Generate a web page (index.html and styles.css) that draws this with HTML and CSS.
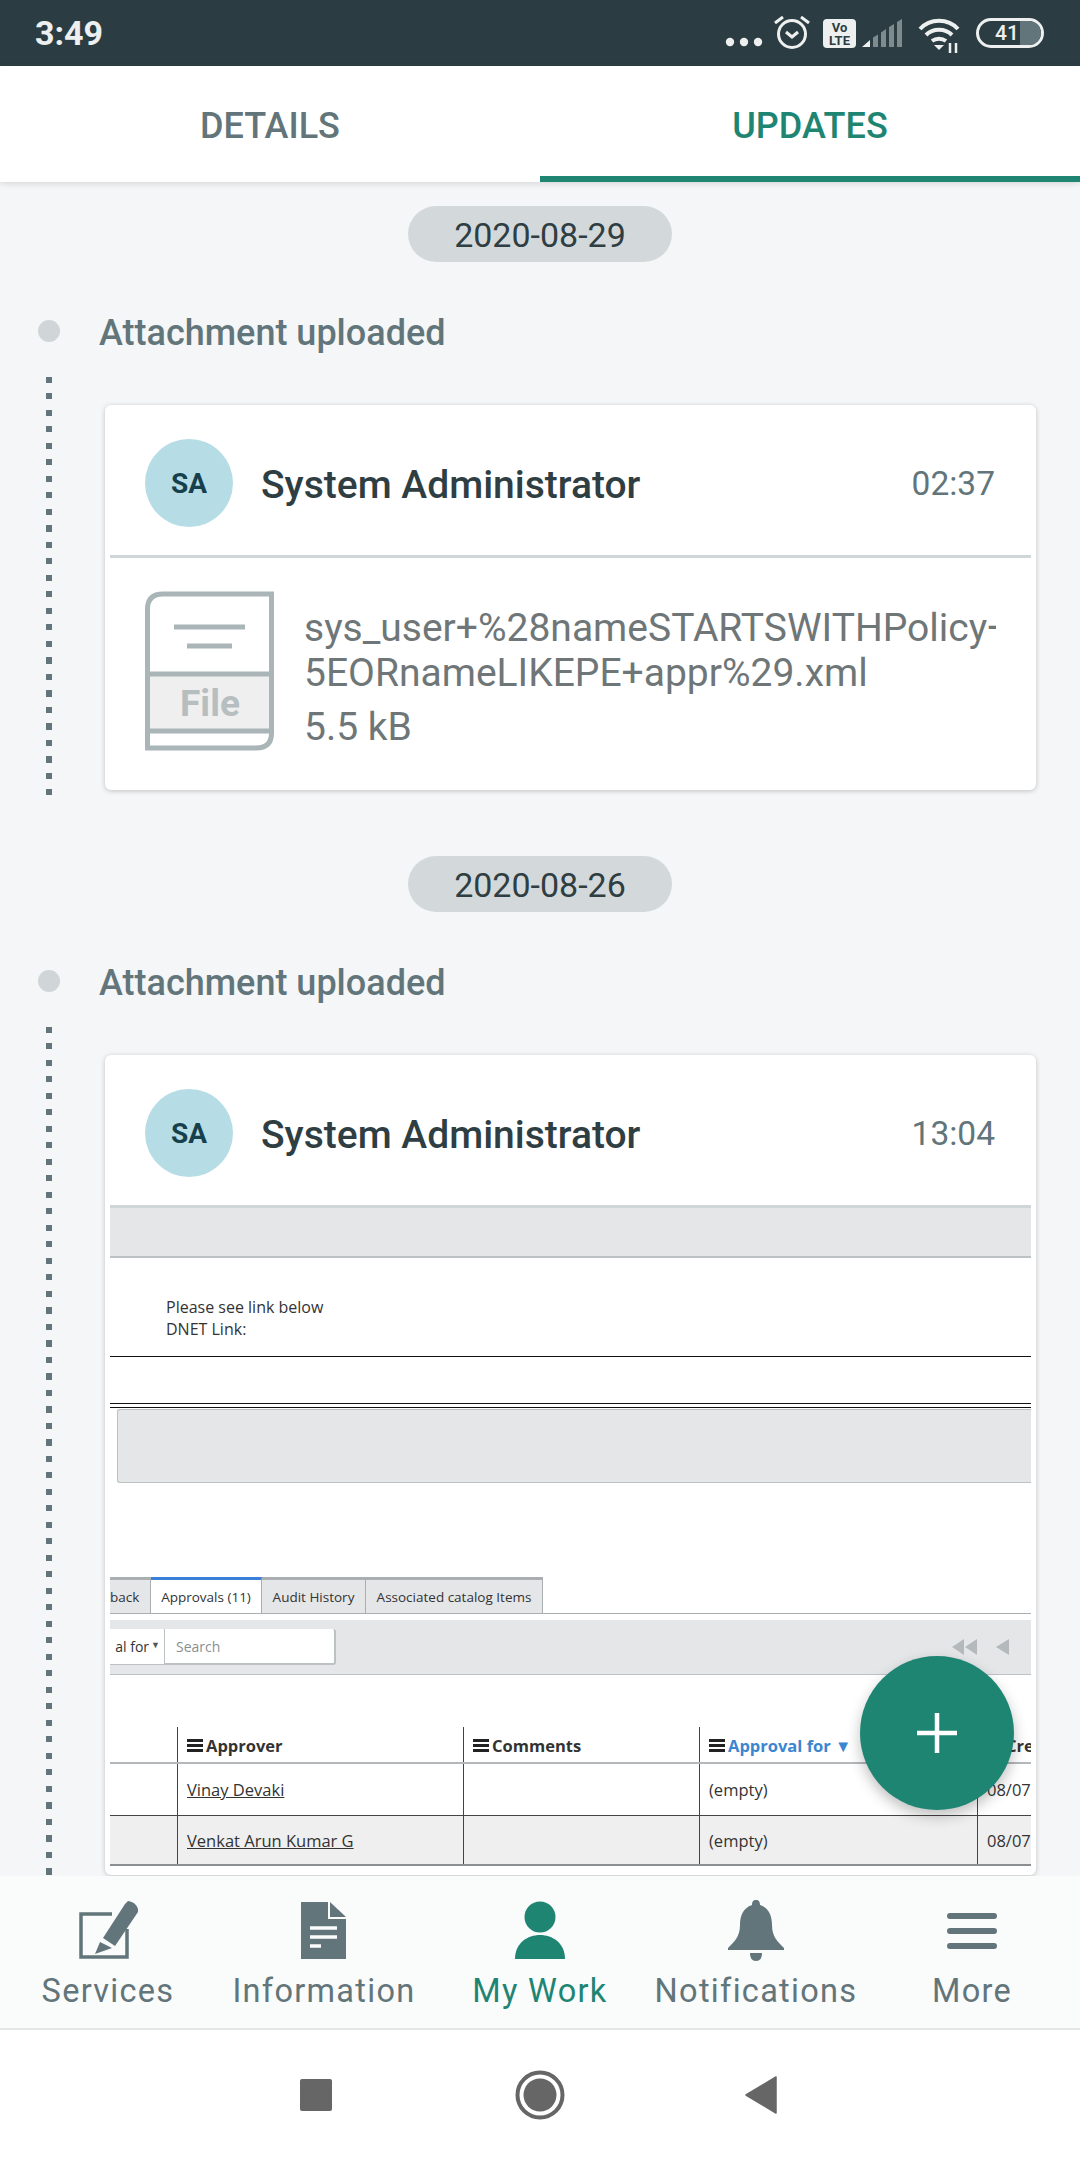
FILE: index.html
```html
<!DOCTYPE html>
<html lang="en">
<head>
  <meta charset="UTF-8">
  <title>Updates</title>
  <link rel="stylesheet" href="styles.css">
</head>
<body>
<div class="phone">
  <div class="status-bar">
    <div class="status-time">3:49</div>
    <div class="status-icons">
      <svg class="st-dots" width="40" height="10" viewBox="0 0 40 10"><circle cx="5" cy="5" r="4.2"/><circle cx="19" cy="5" r="4.2"/><circle cx="33" cy="5" r="4.2"/></svg>
      <svg class="st-alarm" width="38" height="36" viewBox="0 0 38 36"><circle cx="19" cy="21" r="13.5" fill="none" stroke="#eef0f0" stroke-width="3"/><path d="M13 19l6 5 6-5" fill="none" stroke="#eef0f0" stroke-width="3"/><path d="M2 10l8-6M36 10l-8-6" fill="none" stroke="#eef0f0" stroke-width="3"/></svg>
      <svg class="st-volte" width="33" height="29" viewBox="0 0 33 29"><rect width="33" height="29" rx="4" fill="#eef0f0"/><text x="16.5" y="13" class="volte-text">Vo</text><text x="16.5" y="25.5" class="volte-text">LTE</text></svg>
      <svg class="st-signal" width="41" height="30" viewBox="0 0 41 30"><path d="M0 29H8V22Z" fill="#eef0f0"/><path d="M11 29V19.500L16 16.500V29ZM19 29V14.500L24 11V29ZM27 29V9L32 6V29ZM35 29V4L40 1V29Z" fill="#7d8b8e"/></svg>
      <svg class="st-wifi" width="44" height="36" viewBox="0 0 44 36"><path d="M2 11C12 0 30 0 40 11M8 17c7-7 19-7 26 0M14 23c4-3 10-3 14 0" fill="none" stroke="#eef0f0" stroke-width="4"/><path d="M16 27h10l-5 5z" fill="#eef0f0"/><path d="M32 25v10M38 25v10" stroke="#eef0f0" stroke-width="2.500"/></svg>
      <div class="battery"><div class="battery-fill"></div><span class="battery-num">41</span></div>
    </div>
  </div>

  <div class="tabs">
    <div class="tab">DETAILS</div>
    <div class="tab tab-active">UPDATES</div>
  </div>

  <div class="content">
    <div class="day">
      <div class="date-pill">2020-08-29</div>
      <div class="event-title"><span class="event-dot"></span>Attachment uploaded</div>
      <div class="event-body">
        <div class="dots"></div>
        <div class="card">
          <div class="card-head">
            <div class="avatar">SA</div>
            <div class="card-name">System Administrator</div>
            <div class="card-time">02:37</div>
          </div>
          <div class="file-row">
            <svg class="file-icon" width="129" height="160" viewBox="0 0 129 160">
              <rect x="3" y="83" width="123" height="57" fill="#efefef"/>
              <path d="M126.500 3H18Q2.500 3 2.500 18V157H111Q126.500 157 126.500 142Z" fill="none" stroke="#aab5b8" stroke-width="5"/>
              <path d="M3 83H126M3 140H126" stroke="#aab5b8" stroke-width="5"/>
              <path d="M29 36H100M42 55H87" stroke="#aab5b8" stroke-width="5"/>
              <text x="65" y="125" class="file-label">File</text>
            </svg>
            <div class="file-info">
              <div class="file-name">sys_user+%28nameSTARTSWITHPolicy+</div>
              <div class="file-name">5EORnameLIKEPE+appr%29.xml</div>
              <div class="file-size">5.5 kB</div>
            </div>
          </div>
        </div>
      </div>
    </div>

    <div class="day day-tall">
      <div class="date-pill">2020-08-26</div>
      <div class="event-title"><span class="event-dot"></span>Attachment uploaded</div>
      <div class="event-body">
        <div class="dots"></div>
        <div class="card card-tall">
          <div class="card-head">
            <div class="avatar">SA</div>
            <div class="card-name">System Administrator</div>
            <div class="card-time">13:04</div>
          </div>
          <div class="shot">
            <div class="shot-bar"></div>
            <div class="shot-msg">Please see link below<br>DNET Link:</div>
            <div class="shot-rule"></div>
            <div class="shot-double"></div>
            <div class="shot-box"></div>
            <div class="shot-tabs">
              <div class="shot-tab shot-tab-cut">back</div>
              <div class="shot-tab shot-tab-on">Approvals (11)</div>
              <div class="shot-tab shot-tab-audit">Audit History</div>
              <div class="shot-tab shot-tab-assoc">Associated catalog Items</div>
            </div>
            <div class="shot-tools">
              <div class="shot-select">al for<span class="shot-caret">▼</span></div>
              <div class="shot-search">Search</div>
              <div class="shot-pager">
                <svg width="58" height="16" viewBox="0 0 58 16"><path d="M0 8l12-8v16zM13 8l12-8v16zM44 8l13-8v16z" fill="#b4babc"/></svg>
              </div>
            </div>
            <div class="shot-table">
              <div class="shot-row shot-row-head">
                <div class="cell cell-a"></div>
                <div class="cell cell-b"><span class="menu-icon"></span>Approver</div>
                <div class="cell cell-c"><span class="menu-icon"></span>Comments</div>
                <div class="cell cell-d"><span class="menu-icon"></span><span class="sorted">Approval for ▼</span></div>
                <div class="cell cell-e"><span class="menu-icon"></span>Cre</div>
              </div>
              <div class="shot-row shot-row-one">
                <div class="cell cell-a"></div>
                <div class="cell cell-b"><u>Vinay Devaki</u></div>
                <div class="cell cell-c"></div>
                <div class="cell cell-d">(empty)</div>
                <div class="cell cell-e">08/07</div>
              </div>
              <div class="shot-row shot-row-two">
                <div class="cell cell-a"></div>
                <div class="cell cell-b"><u>Venkat Arun Kumar G</u></div>
                <div class="cell cell-c"></div>
                <div class="cell cell-d">(empty)</div>
                <div class="cell cell-e">08/07</div>
              </div>
            </div>
          </div>
        </div>
      </div>
    </div>

    <div class="fab">
      <svg width="44" height="44" viewBox="0 0 44 44"><path d="M22 2V42M2 22H42" stroke="#fff" stroke-width="4.500"/></svg>
    </div>
  </div>

  <div class="bottom-nav">
    <div class="nav-item">
      <svg width="64" height="62" viewBox="0 0 64 62"><path d="M51 29V57H5V14H36" fill="none" stroke="#62757a" stroke-width="3.500"/><path d="M52 1c6 1 11 5 10 11L39 46 27 38 49 4zM24 42l12 6-17 6z" fill="#62757a"/></svg>
      <div class="nav-label">Services</div>
    </div>
    <div class="nav-item">
      <svg width="46" height="62" viewBox="0 0 46 62"><path d="M0 2H27V19H45V59H0Z" fill="#62757a"/><path d="M29 2L45 17H29Z" fill="#62757a"/><path d="M9 28H36M9 37H36M9 46H20" stroke="#fafbfb" stroke-width="3.500"/></svg>
      <div class="nav-label">Information</div>
    </div>
    <div class="nav-item nav-item-active">
      <svg width="50" height="62" viewBox="0 0 50 62"><circle cx="25" cy="17" r="15.500" fill="#1f8573"/><path d="M0 59C0 27 50 27 50 59Z" fill="#1f8573"/></svg>
      <div class="nav-label">My Work</div>
    </div>
    <div class="nav-item">
      <svg width="56" height="62" viewBox="0 0 56 62"><path d="M28 0c3 0 4 2 4 5 9 3 12 11 12 20 0 12 6 17 12 23v2H0v-2c6-6 12-11 12-23 0-9 3-17 12-20 0-3 1-5 4-5zM22 53h12c0 5-2 8-6 8s-6-3-6-8z" fill="#62757a"/></svg>
      <div class="nav-label">Notifications</div>
    </div>
    <div class="nav-item">
      <svg width="50" height="62" viewBox="0 0 50 62"><path d="M3 16H47M3 31H47M3 46H47" stroke="#62757a" stroke-width="6" stroke-linecap="round"/></svg>
      <div class="nav-label">More</div>
    </div>
  </div>

  <div class="system-nav">
    <div class="sys-square"></div>
    <svg width="50" height="50" viewBox="0 0 50 50"><circle cx="25" cy="25" r="22.500" fill="none" stroke="#666" stroke-width="4"/><circle cx="25" cy="25" r="16.500" fill="#666"/></svg>
    <svg class="sys-back" width="32" height="38" viewBox="0 0 32 38"><path d="M28 1V37L-2 19Z" fill="#666" stroke="#666" stroke-width="1.500" stroke-linejoin="round"/></svg>
  </div>
</div>
</body>
</html>
```

FILE: styles.css
```css
* {
  margin: 0;
  padding: 0;
  box-sizing: border-box;
}

body {
  font-family: Roboto, sans-serif;
  background-color: #f4f6f8;
  color: #333;
}

.phone {
  width: 1080px;
  height: 2160px;
  display: flex;
  flex-direction: column;
  overflow: hidden;
}

/* status bar */
.status-bar {
  height: 66px;
  flex: none;
  background-color: #2b3d42;
  color: #eef0f0;
  display: flex;
  justify-content: space-between;
  align-items: center;
  padding: 0 36px 0 35px;
}

.status-time {
  font-size: 34px;
  font-weight: 700;
}

.status-icons {
  display: flex;
  align-items: center;
}

.status-icons svg {
  display: block;
}

.st-dots {
  fill: #eef0f0;
  margin-top: 18px;
  margin-right: 8px;
}

.st-alarm {
  margin-top: -4px;
  margin-right: 12px;
}

.st-volte {
  margin-right: 6px;
}

.volte-text {
  font-family: Roboto, sans-serif;
  font-size: 13px;
  font-weight: 700;
  fill: #2b3d42;
  text-anchor: middle;
}

.st-signal {
  margin-right: 15px;
}

.st-wifi {
  margin-top: 6px;
  margin-right: 14px;
}

.battery {
  width: 68px;
  height: 30px;
  border: 3px solid #eef0f0;
  border-radius: 15px;
  position: relative;
  display: flex;
  align-items: center;
  justify-content: center;
  overflow: hidden;
}

.battery-fill {
  position: absolute;
  top: 0;
  bottom: 0;
  right: 0;
  width: 21px;
  background-color: #62757a;
}

.battery-num {
  position: relative;
  font-size: 21px;
  font-weight: 500;
  margin-right: 6px;
}

/* tabs */
.tabs {
  height: 116px;
  flex: none;
  display: flex;
  background-color: #fff;
  box-shadow: 0 2px 6px rgba(0, 0, 0, 0.12);
  position: relative;
  z-index: 2;
}

.tab {
  width: 540px;
  display: flex;
  align-items: center;
  justify-content: center;
  padding-top: 4px;
  font-size: 36px;
  font-weight: 500;
  color: #62757a;
}

.tab-active {
  color: #1f8573;
  border-bottom: 6px solid #1f8573;
  padding-top: 10px;
}

/* timeline */
.content {
  height: 1694px;
  flex: none;
  position: relative;
  overflow: hidden;
}

.day {
  display: flex;
  flex-direction: column;
  align-items: flex-start;
  padding-top: 24px;
  height: 650px;
}

.day-tall {
  height: auto;
}

.date-pill {
  flex: none;
  align-self: center;
  width: 264px;
  height: 56px;
  padding-top: 2px;
  border-radius: 28px;
  background-color: #d3d9da;
  color: #2f3e42;
  font-size: 34px;
  display: flex;
  align-items: center;
  justify-content: center;
}

.event-title {
  flex: none;
  display: flex;
  align-items: center;
  height: 40px;
  margin-top: 49px;
  padding: 4px 0 0 38px;
  font-size: 36px;
  font-weight: 500;
  color: #62757a;
}

.event-dot {
  width: 22px;
  height: 22px;
  margin-top: -4px;
  border-radius: 50%;
  background-color: #d0d6d8;
  margin-right: 39px;
}

.event-body {
  flex: none;
  display: flex;
  margin-top: 26px;
  padding-left: 46px;
}

.dots {
  width: 6px;
  height: 418px;
  background-image: repeating-linear-gradient(to bottom, #62757a 0, #62757a 6px, transparent 6px, transparent 16.5px);
}

.day-tall .dots {
  height: 860px;
}

.card {
  width: 931px;
  height: 385px;
  margin-top: 28px;
  margin-left: 53px;
  background-color: #fff;
  border-radius: 6px;
  box-shadow: 0 1px 5px rgba(0, 0, 0, 0.22);
  padding: 0 5px;
}

.card-tall {
  height: 820px;
}

.card-head {
  height: 153px;
  display: flex;
  align-items: center;
  padding: 6px 36px 0 35px;
  border-bottom: 3px solid #cfd6d8;
}

.avatar {
  width: 88px;
  height: 88px;
  border-radius: 50%;
  background-color: #b6dde6;
  color: #17404d;
  font-size: 28px;
  font-weight: 700;
  display: flex;
  align-items: center;
  justify-content: center;
}

.card-name {
  flex: 1;
  margin-left: 28px;
  padding-top: 3px;
  font-size: 39px;
  font-weight: 500;
  color: #2f3e42;
}

.card-time {
  font-size: 33.500px;
  color: #62757a;
}

.file-row {
  display: flex;
  padding: 33px 0 0 35px;
}

.file-icon {
  flex: none;
  display: block;
}

.file-label {
  font-family: Roboto, sans-serif;
  font-size: 37px;
  font-weight: 700;
  fill: #b7bec0;
  text-anchor: middle;
}

.file-info {
  width: 692px;
  margin-left: 30px;
  overflow: hidden;
  color: #6f7678;
  font-size: 39px;
}

.file-name {
  white-space: nowrap;
  line-height: 45px;
}

.file-name:first-child {
  margin-top: 15px;
}

.file-size {
  margin-top: 9px;
  line-height: 45px;
}

/* screenshot attached to the second update */
.shot {
  height: 662px;
  overflow: hidden;
  font-family: "Open Sans", sans-serif;
  font-size: 15px;
  color: #333;
}

.shot-bar {
  height: 50px;
  background-color: #e5e6e8;
  border-bottom: 2px solid #bcc1c3;
}

.shot-msg {
  margin: 38px 0 0 56px;
  height: 50px;
  line-height: 22px;
  font-size: 16px;
}

.shot-rule {
  margin-top: 10px;
  border-top: 1px solid #111;
}

.shot-double {
  margin-top: 46px;
  height: 5px;
  border-top: 1px solid #111;
  border-bottom: 1px solid #111;
}

.shot-box {
  height: 74px;
  margin: 1px 0 0 7px;
  background-color: #e5e6e8;
  border: 1px solid #bcc1c3;
  border-right: 0;
  border-radius: 3px 0 0 3px;
}

.shot-tabs {
  display: flex;
  height: 37px;
  margin-top: 94px;
  border-bottom: 1px solid #a9aeb0;
}

.shot-tab {
  display: flex;
  align-items: center;
  justify-content: center;
  background-color: #e5e6e8;
  border-top: 3px solid #a9aeb0;
  border-right: 1px solid #a9aeb0;
  font-size: 13.500px;
  white-space: nowrap;
}

.shot-tab-cut {
  width: 41px;
  justify-content: flex-start;
}

.shot-tab-on {
  width: 111px;
  background-color: #fff;
  border-top-color: #3a80d8;
}

.shot-tab-audit {
  width: 104px;
}

.shot-tab-assoc {
  width: 177px;
}

.shot-tools {
  display: flex;
  align-items: center;
  height: 55px;
  margin-top: 6px;
  background-color: #e5e6e8;
  border-bottom: 1px solid #bcc1c3;
}

.shot-select {
  width: 54px;
  height: 36px;
  display: flex;
  align-items: center;
  justify-content: flex-end;
  padding-right: 4px;
  background-color: #fff;
  border-bottom: 1px solid #bcc1c3;
  font-size: 14px;
}

.shot-caret {
  font-size: 9px;
  margin-left: 2px;
  align-self: flex-start;
  margin-top: 9px;
  color: #555;
}

.shot-search {
  width: 172px;
  height: 36px;
  padding-left: 11px;
  display: flex;
  align-items: center;
  background-color: #fff;
  border-left: 1px solid #bcc1c3;
  border-right: 2px solid #bcc1c3;
  border-bottom: 2px solid #bcc1c3;
  border-radius: 0 3px 3px 0;
  color: #8a8f91;
  font-size: 14px;
}

.shot-pager {
  margin-left: auto;
  margin-right: 21px;
  display: flex;
}

.shot-table {
  margin-top: 52px;
}

.shot-row {
  display: flex;
  height: 50px;
  font-size: 16.500px;
}

.shot-row-head {
  height: 37px;
  font-weight: 700;
  border-bottom: 2px solid #b4b8ba;
}

.shot-row-one {
  height: 52px;
  border-bottom: 1px solid #444;
}

.shot-row-two {
  background-color: #efefef;
  border-bottom: 2px solid #8b8f91;
}

.cell {
  display: flex;
  align-items: center;
  padding-left: 9px;
  border-right: 1px solid #444;
  white-space: nowrap;
  overflow: hidden;
}

.shot-row-head .cell {
  padding-top: 2px;
}

.cell-a {
  width: 68px;
}

.cell-b {
  width: 286px;
}

.cell-c {
  width: 236px;
}

.cell-d {
  width: 278px;
}

.cell-e {
  width: 53px;
  border-right: 0;
}

.menu-icon {
  flex: none;
  width: 16px;
  height: 13px;
  margin-right: 3px;
  background-image: repeating-linear-gradient(to bottom, #222 0, #222 3px, transparent 3px, transparent 5px);
}

.sorted {
  color: #3a86d0;
}

/* add button sits over the screenshot */
.fab {
  position: absolute;
  left: 860px;
  top: 1474px;
  width: 154px;
  height: 154px;
  border-radius: 50%;
  background-color: #1f8573;
  box-shadow: 0 6px 14px rgba(0, 0, 0, 0.25);
  display: flex;
  align-items: center;
  justify-content: center;
}

/* bottom navigation */
.bottom-nav {
  height: 154px;
  flex: none;
  display: grid;
  grid-template-columns: repeat(5, 216px);
  background-color: #fafbfb;
  border-bottom: 2px solid #e4e6e7;
  position: relative;
  z-index: 2;
}

.nav-item {
  display: flex;
  flex-direction: column;
  align-items: center;
  padding-top: 24px;
  color: #62757a;
}

.nav-item svg {
  display: block;
}

.nav-label {
  margin-top: 9px;
  font-size: 32.500px;
  letter-spacing: 1.3px;
  line-height: 40px;
  white-space: nowrap;
}

.nav-item-active {
  color: #1f8573;
}

/* android buttons */
.system-nav {
  flex: 1;
  background-color: #fff;
  display: flex;
  align-items: center;
  justify-content: center;
  gap: 183px;
}

.sys-square {
  width: 32px;
  height: 32px;
  background-color: #666;
  border-radius: 2px;
}

.sys-back {
  overflow: visible;
}
```
